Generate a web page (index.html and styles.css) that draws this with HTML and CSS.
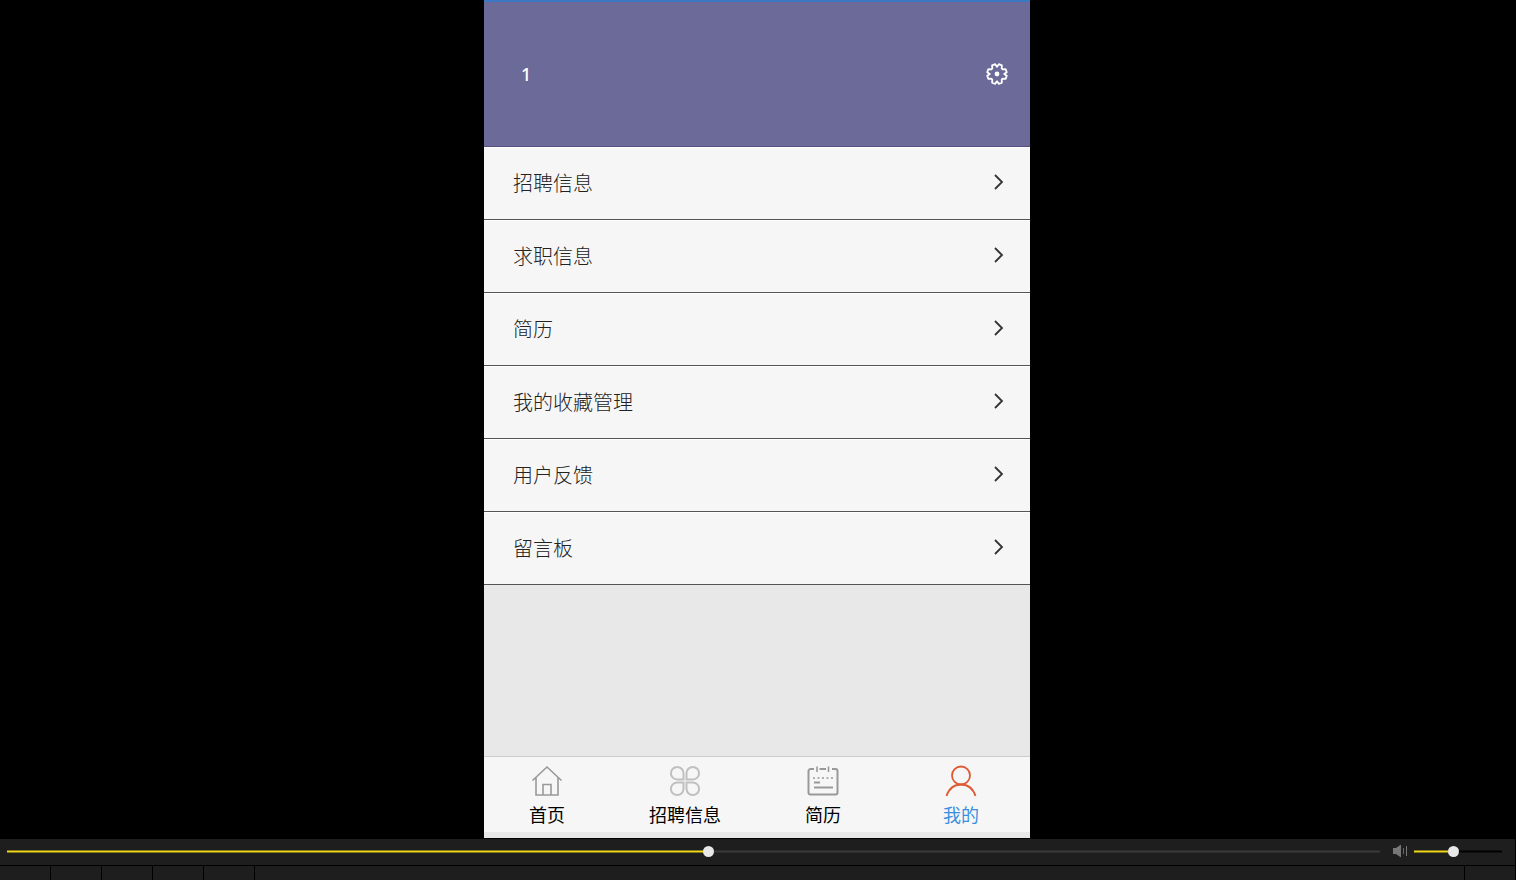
FILE: index.html
```html
<!DOCTYPE html>
<html lang="zh-CN">
<head>
    <meta charset="UTF-8">
    <meta name="viewport" content="width=device-width, initial-scale=1.0">
    <title>我的</title>
    <link rel="stylesheet" href="styles.css">
</head>
<body>
    <main class="stage">
        <div class="phone">
            <header class="profile">
                <span class="profile-name">1</span>
                <button class="settings" type="button" aria-label="设置">
                    <svg width="24" height="24" viewBox="0 0 24 24" fill="none" stroke="#fff" stroke-width="1.8" stroke-linejoin="round">
                        <path d="M12 4.800 13.800 2.200 16.900 3.400 16.700 6.400 17.600 7.300 20.600 7.100 21.800 10.200 19.200 12 21.800 13.800 20.600 16.900 17.600 16.700 16.700 17.600 16.900 20.600 13.800 21.800 12 19.200 10.200 21.800 7.100 20.600 7.300 17.600 6.400 16.700 3.400 16.900 2.200 13.800 4.800 12 2.200 10.200 3.400 7.100 6.400 7.300 7.300 6.400 7.100 3.400 10.200 2.200z"/>
                        <circle cx="12" cy="12" r="2.4" fill="#fff" stroke="none"/>
                    </svg>
                </button>
            </header>

            <nav class="menu">
                <a class="menu-item" href="#">招聘信息 <svg class="arrow" viewBox="0 0 10 16"><path d="M1 1l7 7-7 7"/></svg></a>
                <a class="menu-item" href="#">求职信息 <svg class="arrow" viewBox="0 0 10 16"><path d="M1 1l7 7-7 7"/></svg></a>
                <a class="menu-item" href="#">简历 <svg class="arrow" viewBox="0 0 10 16"><path d="M1 1l7 7-7 7"/></svg></a>
                <a class="menu-item" href="#">我的收藏管理 <svg class="arrow" viewBox="0 0 10 16"><path d="M1 1l7 7-7 7"/></svg></a>
                <a class="menu-item" href="#">用户反馈 <svg class="arrow" viewBox="0 0 10 16"><path d="M1 1l7 7-7 7"/></svg></a>
                <a class="menu-item" href="#">留言板 <svg class="arrow" viewBox="0 0 10 16"><path d="M1 1l7 7-7 7"/></svg></a>
            </nav>

            <nav class="tabbar">
                <a class="tab" href="#">
                    <svg class="tab-icon" viewBox="0 0 32 32" stroke="#999" stroke-width="1.6">
                        <path d="M1.500 15.500 16 2l14.500 13.500M5 12.500V30h22V12.500M12 30V19.500h8V30"/>
                    </svg>
                    首页
                </a>
                <a class="tab" href="#">
                    <svg class="tab-icon" viewBox="0 0 32 32" stroke="#c0c0c0" stroke-width="2">
                        <path d="M14.500 14.500H8.200A6.300 6.300 0 1 1 14.500 8.200z"/>
                        <path d="M17.500 14.500V8.200A6.300 6.300 0 1 1 23.800 14.500z"/>
                        <path d="M14.500 17.500V23.800A6.300 6.300 0 1 1 8.200 17.500z"/>
                        <path d="M17.500 17.500H23.800A6.300 6.300 0 1 1 17.500 23.800z"/>
                    </svg>
                    招聘信息
                </a>
                <a class="tab" href="#">
                    <svg class="tab-icon" viewBox="0 0 32 32" stroke="#999" stroke-width="2">
                        <path d="M7 4H3.500A2 2 0 0 0 1.500 6v21.500a2 2 0 0 0 2 2h25a2 2 0 0 0 2-2V6a2 2 0 0 0-2-2H25M12.500 4h6.500"/>
                        <path d="M10 1.500v5.500M21.500 1.500v5.500" stroke-width="1.6"/>
                        <path d="M6 13h21" stroke-dasharray="2 2.500" stroke-width="1.6"/>
                        <path d="M7 17.500h6M7 22.500h19"/>
                    </svg>
                    简历
                </a>
                <a class="tab active" href="#">
                    <svg class="tab-icon" viewBox="0 0 32 32" stroke="#dd5a33" stroke-width="1.800">
                        <circle cx="16" cy="10.500" r="9"/>
                        <path d="M1.500 31C4 23.500 9.500 19.500 16 19.500S28 23.500 30.500 31"/>
                    </svg>
                    我的
                </a>
            </nav>
        </div>
    </main>

    <footer class="player">
        <div class="player-seek">
            <input class="slider seek" type="range" aria-label="播放进度" max="1000" value="511" style="--fill: 51.1%">
            <svg class="speaker" width="16" height="14" viewBox="0 0 16 14">
                <path d="M1 4h3l5-3.500v13L4 10H1z" fill="#777"/>
                <path d="M11.500 4v6" stroke="#666"/>
                <path d="M14.500 2v10" stroke="#777"/>
            </svg>
            <input class="slider volume" type="range" aria-label="音量" max="1000" value="440" style="--fill: 44%">
        </div>
        <div class="player-controls">
            <span class="cell"></span>
            <span class="cell"></span>
            <span class="cell"></span>
            <span class="cell"></span>
            <span class="cell"></span>
            <span class="cell last"></span>
        </div>
    </footer>
</body>
</html>
```

FILE: styles.css
```css
* {
    box-sizing: border-box;
}
body {
    margin: 0;
    height: 100vh;
    display: flex;
    flex-direction: column;
    background: #000;
    font-family: "Liberation Sans", "Noto Sans CJK SC", sans-serif;
    overflow: hidden;
}
a {
    color: inherit;
    text-decoration: none;
}

/* phone page */
.stage {
    flex: 1;
    min-height: 0;
    display: flex;
    justify-content: center;
    padding: 0 2px 1px 0;
}
.phone {
    width: 546px;
    max-width: 100%;
    display: flex;
    flex-direction: column;
    background: #e8e8e8;
    padding-bottom: 6px;
}
.profile {
    height: 147px;
    display: flex;
    align-items: center;
    justify-content: space-between;
    padding: 0 21px 1px 37px;
    background: #6b6a99;
    border-top: 2px solid #3a78c4;
    border-bottom: 1px solid #55507f;
}
.profile-name {
    color: #fff;
    font-family: "Noto Sans", sans-serif;
    font-size: 18px;
    font-weight: 500;
}
.settings {
    display: flex;
    padding: 0;
    border: none;
    background: none;
    cursor: pointer;
}
.menu-item {
    height: 73px;
    display: flex;
    align-items: center;
    justify-content: space-between;
    padding: 0 26px 3px 29px;
    background: #f6f6f6;
    border-top: 1px solid #fff;
    border-bottom: 1px solid #555;
    color: #222;
    font-size: 20px;
    font-weight: 300;
}
.arrow {
    width: 10px;
    height: 16px;
    fill: none;
    stroke: #333;
    stroke-width: 1.8;
}
.tabbar {
    height: 76px;
    margin-top: auto;
    display: flex;
    justify-content: space-between;
    padding: 8px 32px 0 26px;
    background: #f6f6f6;
    border-top: 1px solid #ccc;
}
.tab {
    width: 74px;
    display: flex;
    flex-direction: column;
    align-items: center;
    gap: 6px;
    color: #000;
    font-size: 18px;
    line-height: 26px;
    white-space: nowrap;
}
.tab.active {
    color: #3a8ee0;
}
.tab-icon {
    width: 32px;
    height: 32px;
    fill: none;
}

/* player bar */
.player {
    background: #1e1e1e;
    border-right: 1px solid #000;
}
.player-seek {
    height: 26px;
    display: flex;
    align-items: center;
    padding: 0 13px 2px 7px;
}
.slider {
    -webkit-appearance: none;
    appearance: none;
    height: 11px;
    margin: 0;
    background: transparent;
}
.seek {
    flex: 1;
    --rest: #3a3a3a;
}
.volume {
    width: 88px;
    --rest: #000;
}
.speaker {
    margin: 0 6px 0 12px;
}
.slider::-webkit-slider-runnable-track {
    height: 3px;
    background: linear-gradient(to right, #f0d818 var(--fill), var(--rest) var(--fill));
    border: solid rgba(30, 30, 30, 0.5);
    border-width: 1px 0;
    background-origin: border-box;
}
.slider::-webkit-slider-thumb {
    -webkit-appearance: none;
    width: 11px;
    height: 11px;
    margin-top: -5px;
    border-radius: 50%;
    background: #e8e8e8;
}
.player-controls {
    height: 15px;
    display: flex;
    border-top: 1px solid #000;
}
.cell {
    width: 51px;
    border-right: 1px solid #000;
}
.cell.last {
    margin-left: auto;
    border-right: none;
    border-left: 1px solid #000;
}
```
